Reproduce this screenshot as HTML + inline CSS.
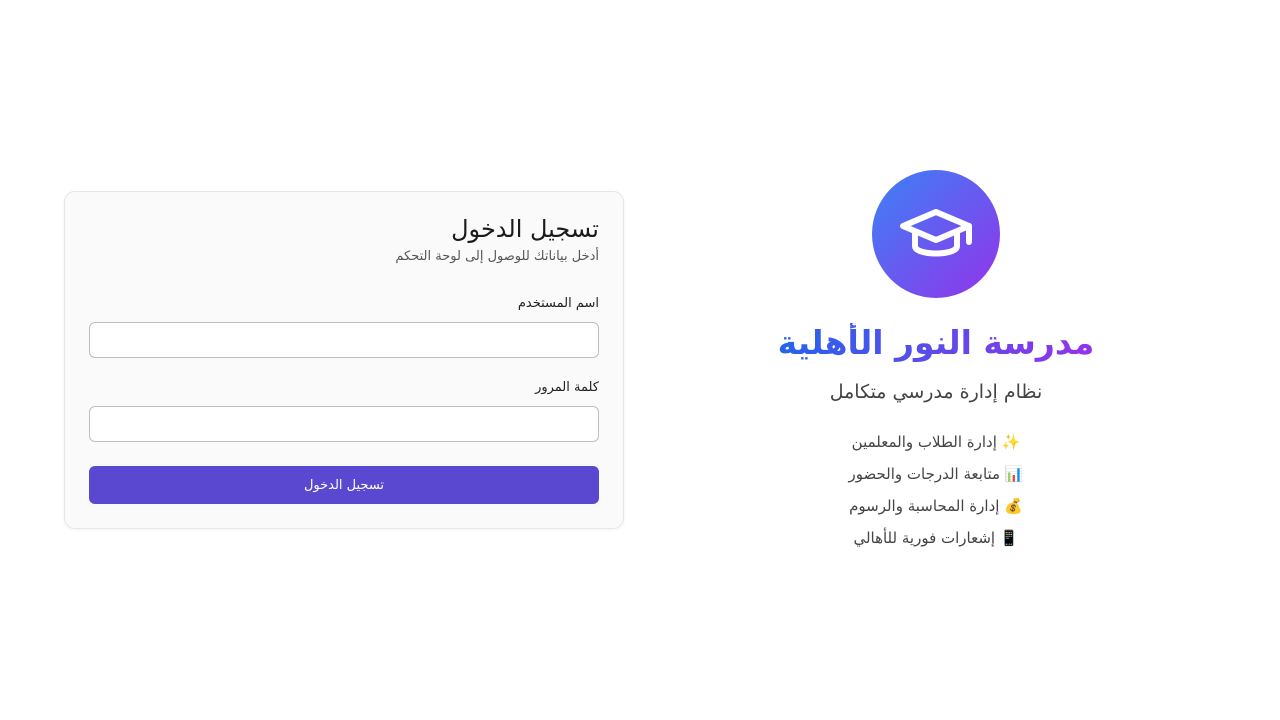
<!DOCTYPE html>
<html dir="rtl"><head><meta charset="utf-8"><style>
*{margin:0;padding:0;box-sizing:border-box}
body{width:1280px;height:720px;background:#fff;font-family:"DejaVu Sans","Liberation Sans",sans-serif;position:relative;overflow:hidden}
.a{position:absolute;white-space:nowrap}
.card{position:absolute;left:64px;top:191px;width:560px;height:338px;background:#fafafa;border:1px solid #e6e6e6;border-radius:11px;box-shadow:0 1px 3px rgba(0,0,0,.05)}
.inp{position:absolute;left:89px;width:510px;height:36px;background:#fff;border:1px solid #bdbdc2;border-radius:6px}
.r{right:681px;text-align:right}
.c{left:736px;width:400px;text-align:center}
</style></head><body>
<div class="card"></div>
<div class="a r" style="top:215px;font-size:24px;color:#1a1a1a;letter-spacing:-1px">تسجيل الدخول</div>
<div class="a r" style="top:249px;font-size:13px;color:#555;letter-spacing:-.3px">أدخل بياناتك للوصول إلى لوحة التحكم</div>
<div class="a r" style="top:296px;font-size:13px;color:#222;letter-spacing:-.2px">اسم المستخدم</div>
<div class="inp" style="top:322px"></div>
<div class="a r" style="top:380px;font-size:13px;color:#222;letter-spacing:-.2px">كلمة المرور</div>
<div class="inp" style="top:406px"></div>
<div class="a" style="left:89px;top:466px;width:510px;height:38px;background:#5b48d1;border-radius:6px;color:#fff;font-size:13px;text-align:center;line-height:40px;letter-spacing:-.3px">تسجيل الدخول</div>

<div class="a" style="left:872px;top:170px;width:128px;height:128px;border-radius:50%;background:linear-gradient(135deg,#3b82f6,#9333ea)"></div>
<svg class="a" style="left:896px;top:200px" width="80" height="72" viewBox="0 0 80 72" fill="none" stroke="#fff" stroke-width="6" stroke-linecap="round" stroke-linejoin="round">
<path d="M7 26 L40 12 L73 26 L40 40 Z"/><path d="M19 32 V46 C19 56 61 56 61 46 V32"/><path d="M73 26 V42"/></svg>
<div class="a c" style="top:323px;font-size:33px;font-weight:bold;letter-spacing:-1.3px"><span style="background:linear-gradient(90deg,#2563eb,#9333ea);-webkit-background-clip:text;background-clip:text;color:transparent">مدرسة النور الأهلية</span></div>
<div class="a c" style="top:381px;font-size:19px;color:#444;letter-spacing:-.5px">نظام إدارة مدرسي متكامل</div>
<div class="a c" style="top:433px;font-size:15px;color:#444;letter-spacing:-.5px">✨ إدارة الطلاب والمعلمين</div>
<div class="a c" style="top:465px;font-size:15px;color:#444;letter-spacing:-.5px">📊 متابعة الدرجات والحضور</div>
<div class="a c" style="top:497px;font-size:15px;color:#444;letter-spacing:-.5px">💰 إدارة المحاسبة والرسوم</div>
<div class="a c" style="top:529px;font-size:15px;color:#444;letter-spacing:-.5px">📱 إشعارات فورية للأهالي</div>
</body></html>
